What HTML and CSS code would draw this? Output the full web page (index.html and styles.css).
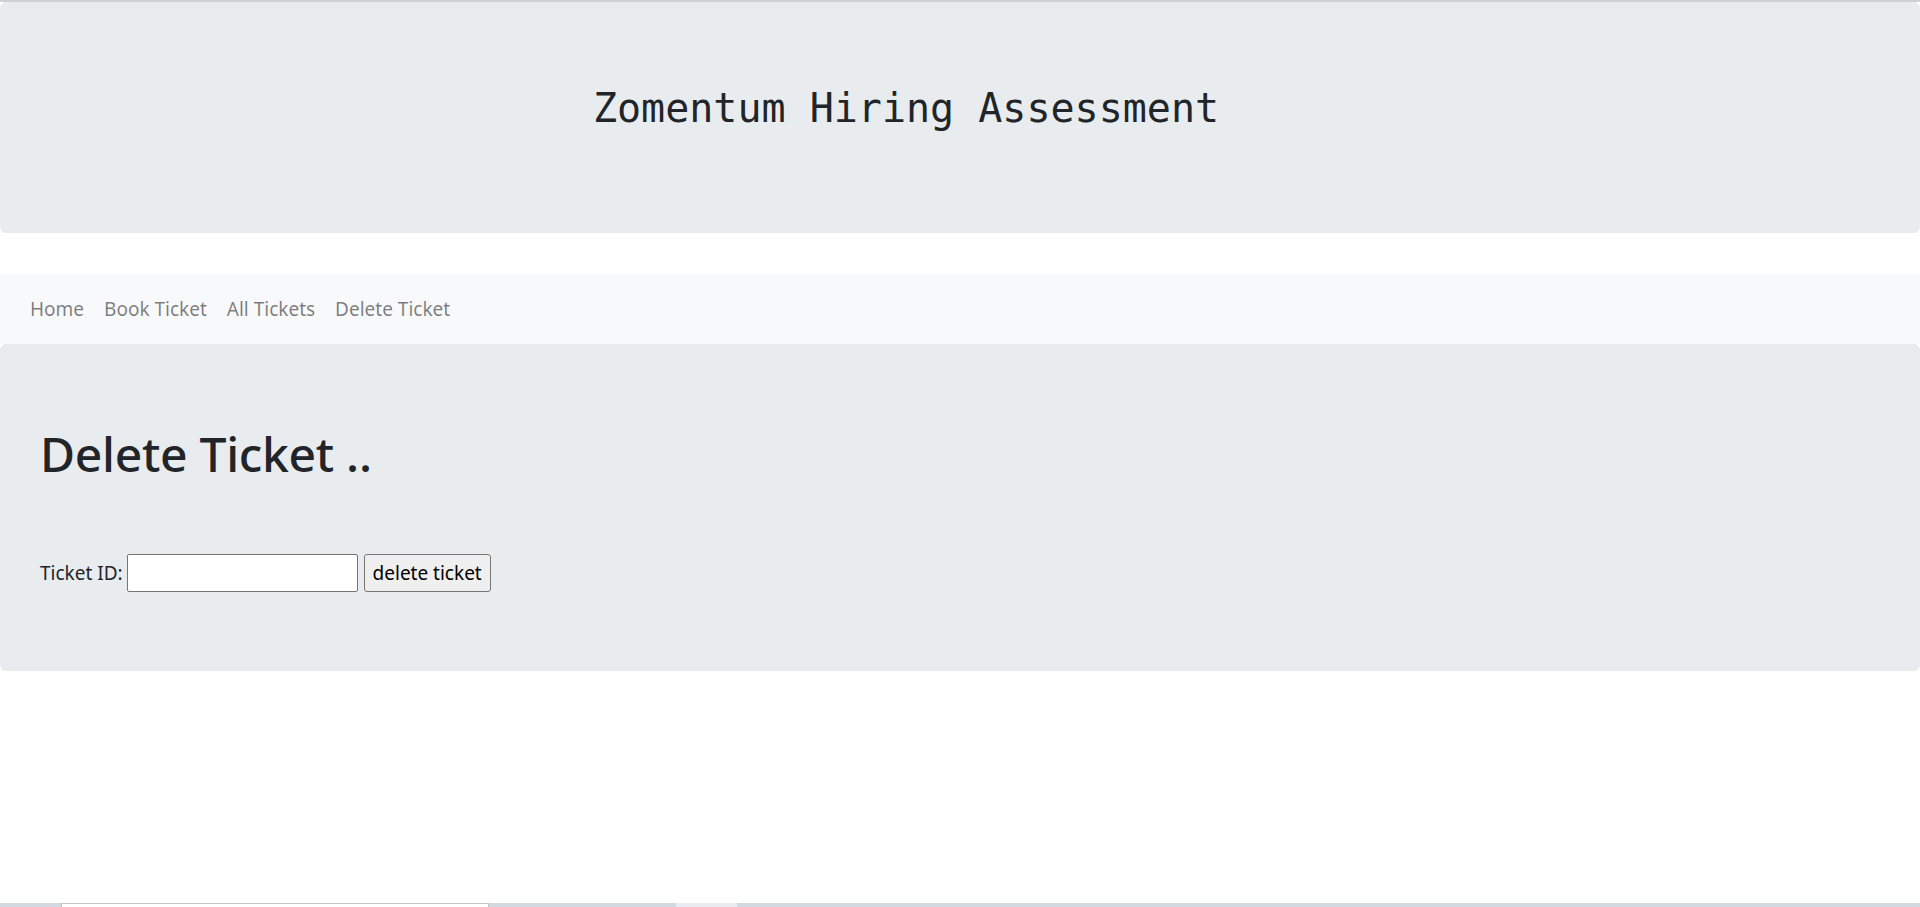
FILE: index.html
```html
<!DOCTYPE html>
<html lang="en">
<head>
<meta charset="utf-8">
<title>Zomentum Hiring Assessment</title>
<link rel="stylesheet" href="styles.css">
</head>
<body>
<div class="topline"></div>
<header class="jumbotron hero">
  <h2 class="hero-title">Zomentum Hiring Assessment</h2>
</header>
<nav class="navbar">
  <a class="nav-link" href="#">Home</a>
  <a class="nav-link" href="#">Book Ticket</a>
  <a class="nav-link" href="#">All Tickets</a>
  <a class="nav-link" href="#">Delete Ticket</a>
</nav>
<main class="jumbotron panel">
  <h1 class="panel-title">Delete Ticket ..</h1>
  <form class="ticket-form">
    <label class="ticket-label" for="tid">Ticket ID:</label>
    <input class="ticket-input" id="tid" type="text">
    <button class="ticket-btn" type="button">delete ticket</button>
  </form>
</main>
<div class="taskbar">
  <div class="seg seg-a"></div>
  <div class="seg seg-white"></div>
  <div class="seg seg-b"></div>
  <div class="seg seg-light"></div>
  <div class="seg seg-c"></div>
</div>
</body>
</html>
```
FILE: styles.css
```css
* { box-sizing: border-box; }
html, body { margin: 0; padding: 0; }
body {
  min-height: 100vh;
  display: flex;
  flex-direction: column;
  background: #fff;
  color: #212529;
  font-family: "Noto Sans", "Open Sans", sans-serif;
  font-size: 19px;
  line-height: 30px;
}
.topline { height: 2px; background: #d0d0d0; flex: none; }
.jumbotron {
  background: #e9ecef;
  border-radius: 6px;
}
.hero {
  height: 231px;
  padding: 82px 148px 0 40px;
  margin-bottom: 41px;
  text-align: center;
}
.hero-title {
  margin: 0;
  font-family: "DejaVu Sans Mono", "Liberation Mono", monospace;
  font-weight: 400;
  font-size: 40px;
  line-height: 48px;
  color: #212529;
}
.navbar {
  height: 70px;
  background: #f8f9fa;
  padding: 10px 20px;
  display: flex;
  align-items: flex-start;
}
.nav-link {
  padding: 10px 10px;
  color: rgba(0,0,0,.5);
  text-decoration: none;
  line-height: 30px;
  font-size: 19px;
}
.panel {
  height: 327px;
  padding: 80px 40px 0 40px;
  border-radius: 6px;
}
.panel-title {
  margin: 0;
  font-size: 48px;
  letter-spacing: -0.3px;
  line-height: 60px;
  font-weight: 500;
  color: #212529;
}
.ticket-form {
  margin-top: 70px;
  display: flex;
  align-items: center;
  height: 38px;
}
.ticket-label { line-height: 30px; margin-right: 4px; }
.ticket-input {
  width: 231px;
  height: 38px;
  border: 1px solid #767676;
  border-radius: 2px;
  background: #fff;
  margin: 0 6px 0 0;
  padding: 1px 3px;
  font: inherit;
}
.ticket-btn {
  width: 127px;
  height: 38px;
  border: 1px solid #767676;
  border-radius: 3px;
  background: #efefef;
  color: #000;
  font: inherit;
  line-height: 30px;
  padding: 0 4px;
  white-space: nowrap;
}
.taskbar {
  margin-top: auto;
  height: 4px;
  display: flex;
  flex: none;
}
.seg { height: 4px; }
.seg-a { width: 61px; background: #d3d9e1; }
.seg-white { width: 428px; background: #fff; border-top: 1px solid #c4c4c4; border-left: 1px solid #c4c4c4; border-right: 1px solid #c4c4c4; }
.seg-b { width: 187px; background: #d3d9e1; }
.seg-light { width: 61px; background: #e9ecf0; }
.seg-c { flex: 1; background: #d3d9e1; }
```
